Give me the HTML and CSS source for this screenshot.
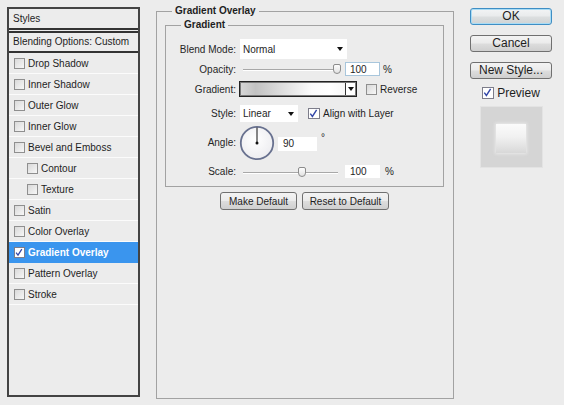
FILE: index.html
```html
<!DOCTYPE html>
<html>
<head>
<meta charset="utf-8">
<title>Layer Style</title>
<link rel="stylesheet" href="styles.css">
</head>
<body>
<div class="dialog">
  <div class="styles-list">
    <div class="list-head">Styles</div>
    <div class="list-blend">Blending Options: Custom</div>
    <div class="item"><span class="cb"></span>Drop Shadow</div>
    <div class="item"><span class="cb"></span>Inner Shadow</div>
    <div class="item"><span class="cb"></span>Outer Glow</div>
    <div class="item"><span class="cb"></span>Inner Glow</div>
    <div class="item"><span class="cb"></span>Bevel and Emboss</div>
    <div class="item sub"><span class="cb"></span>Contour</div>
    <div class="item sub"><span class="cb"></span>Texture</div>
    <div class="item"><span class="cb"></span>Satin</div>
    <div class="item"><span class="cb"></span>Color Overlay</div>
    <div class="item selected"><span class="cb checked"><svg viewBox="0 0 11 11" width="11" height="11"><path d="M2.3 5.6 L4.4 8.4 L8.6 1.8" fill="none" stroke="#3347a8" stroke-width="1.4"/></svg></span>Gradient Overlay</div>
    <div class="item"><span class="cb"></span>Pattern Overlay</div>
    <div class="item"><span class="cb"></span>Stroke</div>
  </div>

  <fieldset class="group outer">
    <legend>Gradient Overlay</legend>
    <fieldset class="group inner">
      <legend>Gradient</legend>

      <div class="row r-blend">
        <span class="lbl">Blend Mode:</span>
        <div class="select w-blend"><span>Normal</span><i class="arrow"></i></div>
      </div>

      <div class="row r-opacity">
        <span class="lbl">Opacity:</span>
        <div class="slider"><div class="track"></div><div class="thumb thumb-opacity"></div></div>
        <div class="num focused">100</div>
        <span class="unit">%</span>
      </div>

      <div class="row r-gradient">
        <span class="lbl">Gradient:</span>
        <div class="swatch"><div class="grad"></div><div class="swatch-arrow"><i class="arrow"></i></div></div>
        <span class="cb rev"></span>
        <span class="cb-text">Reverse</span>
      </div>

      <div class="row r-style">
        <span class="lbl">Style:</span>
        <div class="select w-style"><span>Linear</span><i class="arrow"></i></div>
        <span class="cb checked align"><svg viewBox="0 0 11 11" width="11" height="11"><path d="M2.3 5.6 L4.4 8.4 L8.6 1.8" fill="none" stroke="#3347a8" stroke-width="1.4"/></svg></span>
        <span class="cb-text">Align with Layer</span>
      </div>

      <div class="row r-angle">
        <span class="lbl">Angle:</span>
        <svg class="dial" viewBox="0 0 36 36" width="36" height="36">
          <defs>
            <radialGradient id="dialfill" cx="0.45" cy="0.4" r="0.6">
              <stop offset="0" stop-color="#ffffff"/>
              <stop offset="1" stop-color="#ededf0"/>
            </radialGradient>
          </defs>
          <circle cx="18" cy="18" r="16.2" fill="url(#dialfill)" stroke="#68718f" stroke-width="1.8"/>
          <line x1="18" y1="2.5" x2="18" y2="18" stroke="#111" stroke-width="1"/>
          <circle cx="18" cy="18" r="1.5" fill="#111"/>
        </svg>
        <div class="num angle-num">90</div>
        <span class="deg">°</span>
      </div>

      <div class="row r-scale">
        <span class="lbl">Scale:</span>
        <div class="slider"><div class="track"></div><div class="thumb thumb-scale"></div></div>
        <div class="num">100</div>
        <span class="unit unit-scale">%</span>
      </div>
    </fieldset>

    <div class="defaults">
      <button class="btn small w-make">Make Default</button>
      <button class="btn small w-reset">Reset to Default</button>
    </div>
  </fieldset>

  <div class="side">
    <button class="btn big default">OK</button>
    <button class="btn big">Cancel</button>
    <button class="btn big">New Style...</button>
    <div class="preview-row">
      <span class="cb checked prev-cb"><svg viewBox="0 0 11 11" width="11" height="11"><path d="M2.3 5.6 L4.4 8.4 L8.6 1.8" fill="none" stroke="#3347a8" stroke-width="1.4"/></svg></span>
      <span class="prev-text">Preview</span>
    </div>
    <div class="preview-box"><div class="preview-square"></div></div>
  </div>
</div>
</body>
</html>
```

FILE: styles.css
```css
* { box-sizing: border-box; }

html, body {
  margin: 0;
  padding: 0;
  background: #ececec;
}

body {
  font-family: "Liberation Sans", Arial, sans-serif;
  font-size: 10px;
  color: #1e1e1e;
  width: 564px;
  height: 405px;
  overflow: hidden;
}

.dialog {
  display: flex;
  align-items: flex-start;
  padding: 5px 0 0 7px;
}

/* ---------- left styles list ---------- */
.styles-list {
  flex: none;
  margin-top: 2px;
  width: 133px;
  height: 390px;
  border: 2px solid #434343;
  background: #ececec;
  display: flex;
  flex-direction: column;
  overflow: hidden;
}

.list-head {
  flex: none;
  height: 21px;
  line-height: 19px;
  padding-left: 4px;
  border-bottom: 2px solid #333;
}

.list-blend {
  flex: none;
  margin-top: 1px;
  height: 22px;
  line-height: 18px;
  padding-left: 4px;
  border-top: 2px solid #333;
  border-bottom: 2px solid #333;
}

.item {
  flex: none;
  height: 21px;
  border-bottom: 1px solid #fbfbfb;
  display: flex;
  align-items: center;
  padding-left: 5px;
  gap: 3px;
}

.item.sub { padding-left: 18px; }

.item.selected {
  background: #3a95ee;
  color: #fff;
  font-weight: bold;
  border-bottom-color: #3a95ee;
}

.cb {
  display: inline-flex;
  width: 11px;
  height: 11px;
  border: 1px solid #8f8f8f;
  background: linear-gradient(135deg, #d9d9d9, #f7f7f7);
  flex: none;
}

.cb.checked {
  background: #fff;
  border-color: #7d7d8a;
}

.cb svg {
  display: block;
  margin: -1px 0 0 -1px;
}

/* ---------- group boxes ---------- */
.group {
  margin: 0;
  border: 1px solid #a2a2a2;
  min-width: 0;
}

.group legend {
  font-weight: bold;
  line-height: 12px;
  padding: 0 3px;
}

.outer {
  flex: none;
  margin-left: 16px;
  width: 298px;
  height: 394px;
  padding: 0 9px 0 8px;
}

.outer > legend { margin-left: 7px; }

.inner {
  margin-top: 2px;
  width: 279px;
  padding: 0 0 8px 0;
}

.inner > legend { margin-left: 15px; }

/* ---------- rows ---------- */
.row {
  display: flex;
  align-items: center;
}

.lbl {
  width: 70px;
  text-align: right;
  flex: none;
  color: #262626;
}

.r-blend    { margin-top: 8px; height: 20px; }
.r-opacity  { margin-top: 3px; height: 14px; }
.r-gradient { margin-top: 5px; height: 16px; }
.r-style    { margin-top: 8px; height: 17px; }
.r-angle    { margin-top: 3px; height: 35px; }
.r-scale    { margin-top: 5px; height: 13px; }

.select {
  margin-left: 4px;
  height: 100%;
  background: #fff;
  display: flex;
  align-items: center;
  justify-content: space-between;
  padding: 0 4px 0 3px;
}

.w-blend { width: 107px; }
.w-style { width: 58px; }

.arrow {
  display: block;
  width: 0;
  height: 0;
  border-left: 3.5px solid transparent;
  border-right: 3.5px solid transparent;
  border-top: 4px solid #111;
}

.slider {
  position: relative;
  margin-left: 7px;
  width: 99px;
  height: 100%;
}

.track {
  position: absolute;
  left: 0;
  right: 4px;
  top: 50%;
  height: 1px;
  background: #a8a8a8;
  box-shadow: 0 1px 0 #fff;
}

.thumb {
  position: absolute;
  top: 50%;
  width: 8px;
  height: 10px;
  margin-top: -5px;
  border: 1px solid #8c8c8c;
  border-radius: 2px 2px 4px 4px;
  background: linear-gradient(#fdfdfd, #e2e2e2);
}

.thumb-opacity { left: 90px; }
.thumb-scale { left: 55px; }

.num {
  margin-left: 3px;
  width: 35px;
  height: 100%;
  background: #fff;
  border: 1px solid #fff;
  padding-left: 4px;
  display: flex;
  align-items: center;
}

.num.focused { border-color: #a8c6dc; }

.unit { margin-left: 3px; }
.unit-scale { margin-left: 5px; }

.swatch {
  margin-left: 3px;
  width: 118px;
  height: 16px;
  border: 1px solid #222;
  box-shadow: inset 0 0 0 1px #7a7a7a;
  display: flex;
  padding: 1px;
}

.grad {
  flex: 1;
  background: linear-gradient(90deg, #d6d6d6 0%, #c2c2c2 14%, #dedede 40%, #fbfbfb 68%, #ffffff 85%, #f7f7f7 100%);
}

.swatch-arrow {
  width: 10px;
  border-left: 1px solid #333;
  background: #fff;
  display: flex;
  align-items: center;
  justify-content: center;
}

.cb.rev { margin-left: 9px; }
.cb.align { margin-left: 10px; width: 12px; }

.cb-text { margin-left: 3px; }

.dial {
  margin-left: 3px;
  flex: none;
}

.angle-num {
  margin-left: 3px;
  width: 39px;
  height: 14px;
  margin-top: 2px;
}

.deg {
  align-self: flex-start;
  margin-top: 7px;
  margin-left: 4px;
  font-size: 10px;
}

/* ---------- buttons ---------- */
.defaults {
  margin-top: 5px;
  width: 279px;
  display: flex;
  justify-content: center;
  gap: 5px;
}

.btn {
  font-family: "Liberation Sans", Arial, sans-serif;
  color: #1e1e1e;
  border: 1px solid #707070;
  border-radius: 3px;
  background: linear-gradient(#f3f3f3 0%, #ebebeb 48%, #dddddd 52%, #cfcfcf 100%);
  padding: 0;
  margin: 0;
  cursor: default;
}

.btn.small {
  height: 18px;
  font-size: 10px;
}

.w-make { width: 77px; }
.w-reset { width: 87px; }

.side {
  flex: none;
  margin-left: 16px;
  padding-top: 3px;
  width: 82px;
  display: flex;
  flex-direction: column;
  align-items: center;
}

.btn.big {
  width: 82px;
  height: 17px;
  font-size: 12px;
  line-height: 15px;
  margin-bottom: 10px;
}

.btn.default {
  border-color: #3f8ec4;
  box-shadow: inset 0 0 0 1px #a9dcf5;
  background: linear-gradient(#f2f4f5 0%, #e9ebec 48%, #dcdfe0 52%, #d0d3d4 100%);
}

.preview-row {
  margin-top: -2px;
  display: flex;
  align-items: center;
  gap: 3px;
  height: 12px;
}

.prev-cb { width: 12px; height: 12px; }

.prev-text {
  font-size: 12px;
  color: #1e1e1e;
}

.preview-box {
  margin-top: 7px;
  width: 63px;
  height: 62px;
  background: #d5d5d5;
  border: 1px solid #e3e3e3;
  display: flex;
  align-items: center;
  justify-content: center;
}

.preview-square {
  width: 30px;
  height: 29px;
  margin-top: 3px;
  background: linear-gradient(#fbfbfb 0%, #f1f1f1 45%, #d8d8d8 100%);
  box-shadow: 0 0 3px 1px rgba(235, 235, 235, 0.9);
}
```
